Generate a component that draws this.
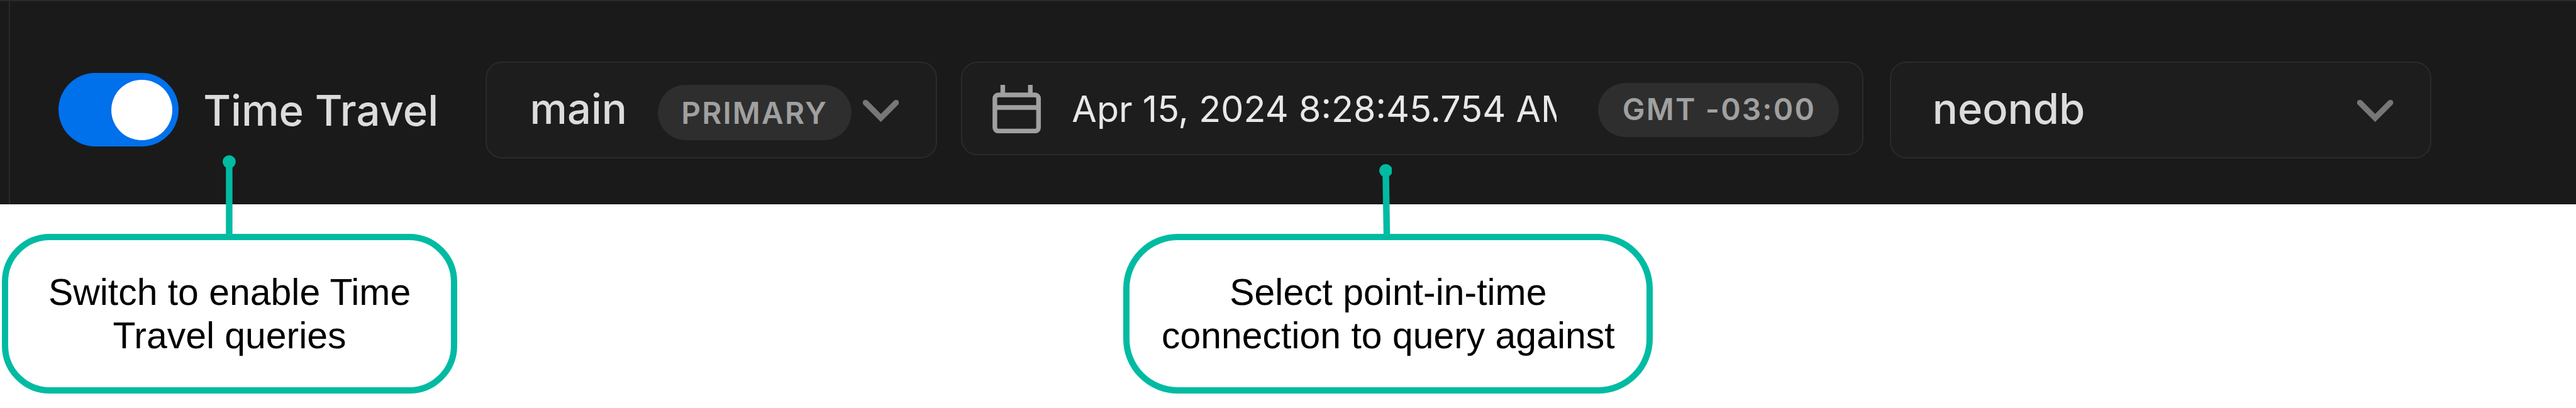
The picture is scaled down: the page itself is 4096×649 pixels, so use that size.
<main class="page">
  <header class="bar">
    <div class="rail"></div>
    <div class="switch"><span class="knob"></span></div>
    <span class="label">Time Travel</span>

    <div class="field branch">
      <span class="value">main</span>
      <span class="badge primary">PRIMARY</span>
      <svg class="chevron" viewBox="0 0 66 40"><path d="M5 5 L33 33 L61 5" /></svg>
    </div>

    <div class="field date">
      <svg class="calendar" viewBox="0 0 89 89">
        <rect x="4.5" y="18.5" width="80" height="66" rx="6" />
        <path d="M4.5 41.5 H84.5 M19 0 V18 M69.5 0 V18" />
      </svg>
      <span class="stamp">Apr 15, 2024 8:28:45.754 AM</span>
      <span class="badge zone">GMT -03:00</span>
    </div>

    <div class="field database">
      <span class="value">neondb</span>
      <svg class="chevron" viewBox="0 0 66 40"><path d="M5 5 L33 33 L61 5" /></svg>
    </div>
  </header>

  <section class="notes">
    <div class="note first">
      <svg class="pin" viewBox="0 0 24 150"><circle cx="12" cy="12" r="12" /><path d="M12 12 V150" /></svg>
      <span>Switch to enable Time</span>
      <span>Travel queries</span>
    </div>
    <div class="note second">
      <svg class="pin" viewBox="0 0 24 134"><circle cx="12" cy="12" r="12" /><path d="M12 12 L14 134" /></svg>
      <span>Select point-in-time</span>
      <span>connection to query against</span>
    </div>
  </section>
</main>

<style>
  :global(body) {
    margin: 0;
    background: #fff;
    overflow: hidden;
  }
  .page {
    --u: calc(100vw / 4720);
    width: 100vw;
    height: 100vh;
    overflow: hidden;
    background: #fff;
    font-family: Inter, sans-serif;
  }
  .bar {
    box-sizing: border-box;
    height: calc(374 * var(--u));
    border-top: calc(3 * var(--u)) solid #2a2a2a;
    background: #1a1a1a;
    display: flex;
    align-items: flex-start;
    white-space: nowrap;
  }
  .rail {
    width: calc(2 * var(--u));
    height: 100%;
    margin-left: calc(16 * var(--u));
    background: #2a2a2a;
    flex: none;
  }
  .switch {
    box-sizing: border-box;
    flex: none;
    width: calc(220.5 * var(--u));
    height: calc(135.4 * var(--u));
    margin: calc(131.3 * var(--u)) 0 0 calc(89.2 * var(--u));
    padding: 0 calc(12.2 * var(--u));
    border-radius: calc(68 * var(--u));
    background: #0070eb;
    display: flex;
    align-items: center;
    justify-content: flex-end;
  }
  .knob {
    width: calc(111 * var(--u));
    height: calc(111 * var(--u));
    border-radius: 50%;
    background: #fff;
  }
  .label,
  .value {
    font-size: calc(77 * var(--u));
    font-weight: 500;
    line-height: calc(100 * var(--u));
    color: #dcdcdc;
  }
  .label {
    width: calc(517.2 * var(--u));
    flex: none;
    margin: calc(150.4 * var(--u)) 0 0 calc(44.8 * var(--u));
    font-size: calc(77.3 * var(--u));
  }
  .value {
    padding-bottom: calc(4.4 * var(--u));
  }
  .field {
    box-sizing: border-box;
    flex: none;
    height: calc(178 * var(--u));
    margin-top: calc(110.3 * var(--u));
    border: calc(3 * var(--u)) solid #2b2b2b;
    border-radius: calc(30 * var(--u));
    background: #1d1d1d;
    display: flex;
    align-items: center;
  }
  .branch {
    width: calc(827 * var(--u));
    padding-left: calc(79 * var(--u));
  }
  .branch .value {
    width: calc(234 * var(--u));
  }
  .date {
    width: calc(1654 * var(--u));
    height: calc(171.5 * var(--u));
    margin-left: calc(44 * var(--u));
    padding-left: calc(55 * var(--u));
  }
  .database {
    width: calc(992 * var(--u));
    margin-left: calc(48 * var(--u));
    padding: 0 calc(67 * var(--u)) 0 calc(76 * var(--u));
    justify-content: space-between;
  }
  .badge {
    box-sizing: border-box;
    flex: none;
    display: flex;
    align-items: center;
    justify-content: center;
    border-radius: calc(52 * var(--u));
    background: #2e2e2e;
    color: #a0a0a0;
    font-size: calc(55 * var(--u));
    font-weight: 600;
    letter-spacing: calc(2.5 * var(--u));
  }
  .primary {
    width: calc(355 * var(--u));
    height: calc(101 * var(--u));
    margin-top: calc(9 * var(--u));
    padding-top: calc(2 * var(--u));
  }
  .zone {
    width: calc(442 * var(--u));
    height: calc(99.5 * var(--u));
    margin: calc(6.5 * var(--u)) 0 0 calc(76 * var(--u));
    padding: 0 0 calc(1 * var(--u)) calc(2 * var(--u));
  }
  .chevron {
    width: calc(66 * var(--u));
    height: calc(40 * var(--u));
    margin-top: calc(4 * var(--u));
    fill: none;
    stroke: #777;
    stroke-width: 10.5;
    stroke-linecap: round;
    flex: none;
  }
  .branch .chevron {
    margin-left: calc(21 * var(--u));
  }
  .calendar {
    width: calc(89 * var(--u));
    height: calc(89 * var(--u));
    margin-top: calc(2.5 * var(--u));
    fill: none;
    stroke: #a0a0a0;
    stroke-width: 8.5;
    flex: none;
  }
  .stamp {
    width: calc(888 * var(--u));
    margin-left: calc(57 * var(--u));
    padding-top: calc(2.6 * var(--u));
    overflow: hidden;
    flex: none;
    font-size: calc(66.2 * var(--u));
    line-height: calc(90 * var(--u));
    color: #e8e8e8;
  }
  .notes {
    display: flex;
    padding: calc(55 * var(--u)) 0 0 calc(3.4 * var(--u));
    gap: calc(1220.5 * var(--u));
    font-family: "Liberation Sans", Arial, sans-serif;
    font-size: calc(67.9 * var(--u));
    line-height: calc(80 * var(--u));
    color: #000;
  }
  .note {
    position: relative;
    box-sizing: border-box;
    flex: none;
    height: calc(292.5 * var(--u));
    border: calc(12 * var(--u)) solid #00bba2;
    background: #fff;
    display: flex;
    flex-direction: column;
    align-items: center;
    justify-content: center;
    white-space: nowrap;
  }
  .first {
    width: calc(834.5 * var(--u));
    border-radius: calc(88 * var(--u));
  }
  .second {
    width: calc(970.5 * var(--u));
    border-radius: calc(100 * var(--u));
  }
  .pin {
    position: absolute;
    width: calc(24 * var(--u));
    fill: #00bba2;
    stroke: #00bba2;
    stroke-width: 12;
  }
  .pin circle {
    stroke: none;
  }
  .first .pin {
    height: calc(150 * var(--u));
    left: calc(393.5 * var(--u));
    top: calc(-156 * var(--u));
  }
  .second .pin {
    height: calc(134 * var(--u));
    left: calc(456.8 * var(--u));
    top: calc(-140 * var(--u));
  }
</style>
